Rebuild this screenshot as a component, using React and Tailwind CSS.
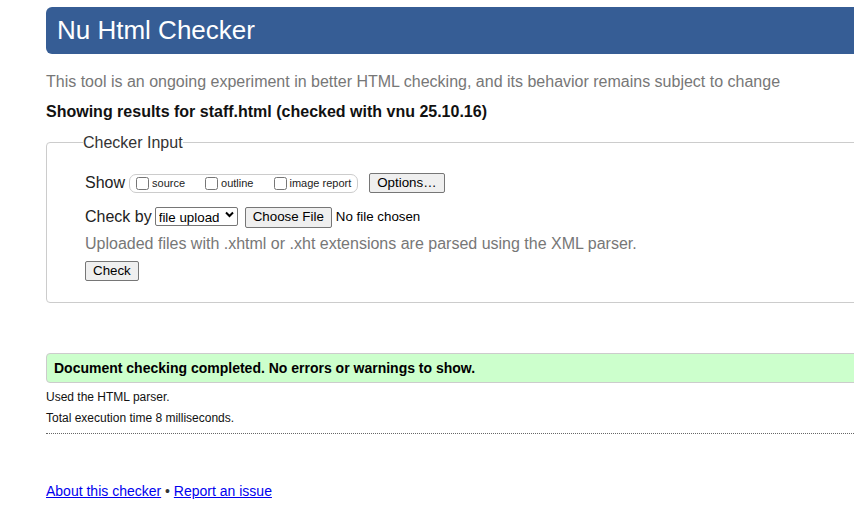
export default function App() {
    const font = { fontFamily: '"Liberation Sans", Arial, sans-serif' };
    const btn = 'inline-flex items-center h-[20px] px-[7px] text-[13.33px] text-black bg-[#efefef] border border-[#767676] rounded-[2px]';

    return (
        <div className="w-[854px] h-[515px] overflow-hidden bg-white" style={font}>
            <div className="w-[900px] pl-[46px]">
                {/* Header */}
                <div className="mt-[7px] h-[47px] bg-[#365d95] rounded-l-[6px] flex items-center pl-[11px]">
                    <h1 className="text-[26px] leading-none text-white pb-[1px]">Nu Html Checker</h1>
                </div>

                <p className="mt-[18px] text-[16px] leading-[19px] text-[#777]">
                    This tool is an ongoing experiment in better HTML checking, and its behavior remains subject to change
                </p>
                <p className="mt-[11px] text-[16px] leading-[19px] font-bold text-[#111]">
                    Showing results for staff.html (checked with vnu 25.10.16)
                </p>

                {/* Checker input */}
                <fieldset className="mt-[12px] border border-[#ccc] rounded-l-[4px] pl-[38px] pb-[20px] pt-[20px]">
                    <legend className="-ml-[2px] text-[16px] leading-[19px] text-[#333]">Checker Input</legend>

                    <div className="flex items-center h-[22px]">
                        <span className="text-[16px] text-[#222]">Show</span>
                        <div className="ml-[4px] flex items-center h-[19px] border border-[#ccc] rounded-[7px] pl-[6px] pr-[6px]">
                            <label className="flex items-center text-[11px] text-[#222]">
                                <input type="checkbox" className="w-[13px] h-[13px] mr-[3px]" />
                                source
                            </label>
                            <label className="ml-[20px] flex items-center text-[11px] text-[#222]">
                                <input type="checkbox" className="w-[13px] h-[13px] mr-[3px]" />
                                outline
                            </label>
                            <label className="ml-[21px] flex items-center text-[11px] text-[#222]">
                                <input type="checkbox" className="w-[13px] h-[13px] mr-[2px]" />
                                image report
                            </label>
                        </div>
                        <button className={`${btn} ml-[11px]`}>Options…</button>
                    </div>

                    <div className="mt-[12px] flex items-center h-[22px]">
                        <span className="text-[16px] text-[#222]">Check by</span>
                        <div className="relative ml-[3px]">
                            <select className="appearance-none h-[19px] w-[83px] pl-[3px] text-[13.33px] text-black bg-white border border-[#767676] rounded-[2px]">
                                <option>file upload</option>
                            </select>
                            <svg className="absolute right-[4px] top-[6px] pointer-events-none" width="9" height="7" viewBox="0 0 9 7">
                                <path d="M1 1.5 L4.5 5 L8 1.5" fill="none" stroke="#000" strokeWidth="2" />
                            </svg>
                        </div>
                        <button className={`${btn} ml-[7px] h-[21px]`}>Choose File</button>
                        <span className="ml-[4px] text-[13.33px] text-black">No file chosen</span>
                    </div>

                    <p className="mt-[6px] text-[16px] leading-[19px] text-[#777]">
                        Uploaded files with .xhtml or .xht extensions are parsed using the XML parser.
                    </p>

                    <button className={`${btn} mt-[8px]`}>Check</button>
                </fieldset>

                {/* Result */}
                <div className="mt-[50px] h-[30px] flex items-center pl-[7px] bg-[#ccffcc] border border-[#ccc] rounded-l-[4px]">
                    <span className="text-[14px] font-bold text-black">Document checking completed. No errors or warnings to show.</span>
                </div>

                <p className="mt-[7px] text-[12px] leading-[14px] text-[#111]">Used the HTML parser.</p>
                <p className="mt-[7px] text-[12px] leading-[14px] text-[#111]">Total execution time 8 milliseconds.</p>
                <div className="mt-[8px] border-b border-dotted border-[#666]" />

                <p className="mt-[49px] text-[14px] leading-[16px] text-[#333]">
                    <a href="#" className="text-[#0000ee] underline">About this checker</a>
                    {' • '}
                    <a href="#" className="text-[#0000ee] underline">Report an issue</a>
                </p>
            </div>
        </div>
    );
}
